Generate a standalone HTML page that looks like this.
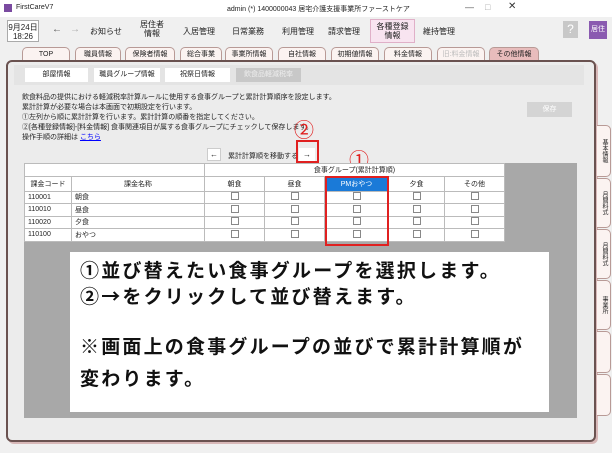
<!DOCTYPE html>
<html><head><meta charset="utf-8"><style>
*{margin:0;padding:0;box-sizing:border-box}
body{width:612px;height:453px;background:#f0f0f0;font-family:"Liberation Sans","Noto Sans CJK JP",sans-serif;position:relative;overflow:hidden;color:#222}
.a{position:absolute}
.s{font-size:7px;white-space:nowrap}
.tab{position:absolute;top:47px;height:14px;background:#fbf3f1;border:1px solid #b89a96;border-bottom:none;border-radius:5px 5px 0 0;font-size:7px;text-align:center;line-height:13px}
.btn{position:absolute;top:68px;height:14px;background:#fff;font-size:7px;text-align:center;line-height:14px}
table{border-collapse:collapse;font-size:7px}
td{border:1px solid #bbb;height:12.5px;padding:0 3px;background:#fff}
.cb{display:inline-block;width:8px;height:8px;border:1px solid #888;background:#fff}
.c{text-align:center}
.vt{position:absolute;left:597px;width:14px;background:#fbf3f1;border:1px solid #b89a96;border-left:none;border-radius:0 5px 5px 0;font-size:6px;writing-mode:vertical-rl;text-align:center;line-height:12px}
.big{font-family:"Noto Sans CJK JP",sans-serif;font-size:19px;font-weight:bold;letter-spacing:2.2px;position:absolute;left:80px;white-space:nowrap;color:#111;line-height:24px}
.circ{font-family:"Noto Sans CJK JP",sans-serif;font-size:20px;color:#e02020;line-height:22px}
</style></head><body>
<div class="a" style="left:0;top:0;width:612px;height:17px;background:#fff"></div>
<div class="a" style="left:4px;top:4px;width:8px;height:8px;background:#7a4aa0"></div>
<div class="a s" style="left:16px;top:4px">FirstCareV7</div>
<div class="a s" style="left:227px;top:4px">admin (*) 1400000043 居宅介護支援事業所ファーストケア</div>
<div class="a" style="left:465px;top:2px;font-size:9px;color:#555">—</div>
<div class="a" style="left:485px;top:2px;font-size:9px;color:#aaa">□</div>
<div class="a" style="left:508px;top:1px;font-size:10px;color:#333">✕</div>
<div class="a" style="left:7px;top:20px;width:32px;height:22px;background:#fff;border:1px solid #aaa;font-size:8px;text-align:center;line-height:9px;padding-top:2px">9月24日<br>18:26</div>
<div class="a" style="left:52px;top:24px;font-size:10px;color:#555">←</div>
<div class="a" style="left:70px;top:24px;font-size:10px;color:#aaa">→</div>
<div class="a" style="left:90px;top:26px;font-size:8px">お知らせ</div>
<div class="a" style="left:140px;top:20px;font-size:8px;text-align:center;line-height:9px">居住者<br>情報</div>
<div class="a" style="left:183px;top:26px;font-size:8px">入居管理</div>
<div class="a" style="left:232px;top:26px;font-size:8px">日常業務</div>
<div class="a" style="left:282px;top:26px;font-size:8px">利用管理</div>
<div class="a" style="left:328px;top:26px;font-size:8px">請求管理</div>
<div class="a" style="left:370px;top:19px;width:45px;height:24px;background:#f8e4f0;border:1px solid #e0b0c8;font-size:8px;text-align:center;line-height:9px;padding-top:2px">各種登録<br>情報</div>
<div class="a" style="left:423px;top:26px;font-size:8px">維持管理</div>
<div class="a" style="left:563px;top:21px;width:15px;height:17px;background:#c8c8c8;color:#fff;font-size:12px;text-align:center;line-height:17px">?</div>
<div class="a" style="left:589px;top:21px;width:18px;height:18px;background:#8a5ab0;color:#fff;font-size:7px;text-align:center;line-height:18px">居住</div>
<div class="tab" style="left:22px;width:48px">TOP</div>
<div class="tab" style="left:75px;width:46px">職員情報</div>
<div class="tab" style="left:125px;width:50px">保険者情報</div>
<div class="tab" style="left:180px;width:42px">総合事業</div>
<div class="tab" style="left:225px;width:48px">事業所情報</div>
<div class="tab" style="left:278px;width:48px">自社情報</div>
<div class="tab" style="left:331px;width:48px">初期値情報</div>
<div class="tab" style="left:384px;width:48px">料金情報</div>
<div class="tab" style="left:437px;width:48px;color:#bbb">旧:料金情報</div>
<div class="tab" style="left:489px;width:50px;background:#e8bcbc">その他情報</div>
<div class="a" style="left:6px;top:60px;width:590px;height:382px;border:2px solid #6a5250;border-radius:6px;background:#ececec;box-shadow:2px 2px 0 #d8b8b8"></div>
<div class="a" style="left:14px;top:65px;width:570px;height:20px;background:#e4e4e4"></div>
<div class="btn" style="left:25px;width:63px">部屋情報</div>
<div class="btn" style="left:94px;width:66px">職員グループ情報</div>
<div class="btn" style="left:165px;width:65px">祝祭日情報</div>
<div class="btn" style="left:236px;width:65px;background:#c8c8c8;color:#eee">飲食品軽減税率</div>
<div class="a s" style="left:22px;top:93px;line-height:10px">飲食料品の提供における軽減税率計算ルールに使用する食事グループと累計計算順序を設定します。<br>累計計算が必要な場合は本画面で初期設定を行います。<br>①左列から順に累計計算を行います。累計計算の順番を指定してください。<br>②[各種登録情報]-[料金情報] 食事関連項目が属する食事グループにチェックして保存します。<br>操作手順の詳細は <span style="color:#00f;text-decoration:underline">こちら</span></div>
<div class="a" style="left:527px;top:102px;width:45px;height:15px;background:#d4d4d4;color:#fff;font-size:7px;text-align:center;line-height:15px">保存</div>
<div class="a" style="left:207px;top:148px;width:14px;height:13px;background:#fff;border:1px solid #ccc;font-size:8px;text-align:center;line-height:11px">←</div>
<div class="a s" style="left:228px;top:151px">累計計算順を移動する</div>
<div class="a" style="left:299px;top:148px;width:16px;height:13px;background:#fff;font-size:8px;text-align:center;line-height:13px">→</div>
<div class="a" style="left:296px;top:140px;width:23px;height:23px;border:2px solid #e02020"></div>
<div class="a circ" style="left:294px;top:118px">②</div>
<div class="a circ" style="left:349px;top:148px">①</div>
<div class="a" style="left:24px;top:163px;width:553px;height:255px;background:#a8a8a8"></div>
<table class="a" style="left:24px;top:163px;width:481px">
<tr><td colspan="2" style="width:181px"></td><td colspan="5" class="c">食事グループ(累計計算順)</td></tr>
<tr style="height:15px"><td class="c" style="width:47px">課金コード</td><td class="c">課金名称</td><td class="c" style="width:60px">朝食</td><td class="c" style="width:60px">昼食</td><td class="c" style="width:64px;background:#1a7ad8;color:#fff">PMおやつ</td><td class="c" style="width:56px">夕食</td><td class="c" style="width:60px">その他</td></tr>
<tr><td>110001</td><td>朝食</td><td class="c"><span class="cb"></span></td><td class="c"><span class="cb"></span></td><td class="c"><span class="cb"></span></td><td class="c"><span class="cb"></span></td><td class="c"><span class="cb"></span></td></tr>
<tr><td>110010</td><td>昼食</td><td class="c"><span class="cb"></span></td><td class="c"><span class="cb"></span></td><td class="c"><span class="cb"></span></td><td class="c"><span class="cb"></span></td><td class="c"><span class="cb"></span></td></tr>
<tr><td>110020</td><td>夕食</td><td class="c"><span class="cb"></span></td><td class="c"><span class="cb"></span></td><td class="c"><span class="cb"></span></td><td class="c"><span class="cb"></span></td><td class="c"><span class="cb"></span></td></tr>
<tr><td>110100</td><td>おやつ</td><td class="c"><span class="cb"></span></td><td class="c"><span class="cb"></span></td><td class="c"><span class="cb"></span></td><td class="c"><span class="cb"></span></td><td class="c"><span class="cb"></span></td></tr>
</table>
<div class="a" style="left:325px;top:176px;width:64px;height:70px;border:2px solid #e02020"></div>
<div class="a" style="left:70px;top:252px;width:479px;height:160px;background:#fff"></div>
<div class="big" style="top:258px">①並び替えたい食事グループを選択します。</div>
<div class="big" style="top:284px">②→をクリックして並び替えます。</div>
<div class="big" style="top:334px">※画面上の食事グループの並びで累計計算順が</div>
<div class="big" style="top:366px">変わります。</div>
<div class="vt" style="top:125px;height:52px">基本情報</div>
<div class="vt" style="top:178px;height:50px">月間料式</div>
<div class="vt" style="top:229px;height:50px">月間料式</div>
<div class="vt" style="top:280px;height:50px">事業所</div>
<div class="vt" style="top:331px;height:42px"></div>
<div class="vt" style="top:374px;height:42px"></div>
</body></html>
